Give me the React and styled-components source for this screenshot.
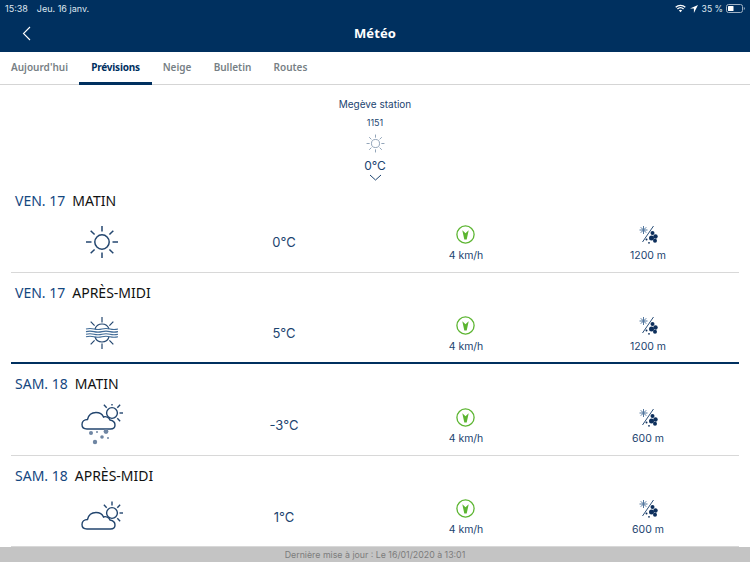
import React from "react";
import styled, { createGlobalStyle } from "styled-components";

const navy = "#00305f";
const ink = "#1c4470";

const GlobalStyle = createGlobalStyle`
  html, body { margin: 0; padding: 0; background: #fff; }
  body { font-family: "Noto Sans", "Open Sans", sans-serif; }
`;

const Page = styled.div`
  width: 750px;
  height: 562px;
  display: flex;
  flex-direction: column;
  overflow: hidden;
`;

const Header = styled.div`
  background: ${navy};
  height: 52px;
  flex: none;
  display: flex;
  flex-direction: column;
  color: #fff;
`;

const StatusBar = styled.div`
  height: 17px;
  padding: 0 5px;
  display: flex;
  align-items: center;
  justify-content: space-between;
  font-family: Inter, sans-serif;
  font-size: 9px;
  color: #dfe7ef;
`;

const StatusGroup = styled.div`
  display: flex;
  align-items: center;
  gap: ${({ $gap }) => $gap}px;
`;

const Percent = styled.span`
  font-size: 8.6px;
  margin-right: -1px;
`;

const NavBar = styled.div`
  flex: 1;
  display: flex;
  align-items: center;
  justify-content: center;
  position: relative;
  padding-bottom: 3px;
`;

const BackButton = styled.svg`
  position: absolute;
  left: 22px;
  top: 9px;
`;

const NavTitle = styled.div`
  font-size: 13px;
  font-weight: 700;
  letter-spacing: 0.1px;
`;

const Tabs = styled.div`
  height: 32px;
  flex: none;
  display: flex;
  border-bottom: 1px solid #d5d5d5;
  background: #fff;
`;

const Tab = styled.div`
  width: ${({ $w }) => $w}px;
  height: 33px;
  box-sizing: border-box;
  display: flex;
  align-items: center;
  justify-content: center;
  font-size: 10px;
  font-weight: ${({ $active }) => ($active ? 700 : 600)};
  letter-spacing: ${({ $active }) => ($active ? "-0.2px" : "0")};
  color: ${({ $active }) => ($active ? navy : "#777f85")};
  border-bottom: 3px solid ${({ $active }) => ($active ? navy : "transparent")};
`;

const Content = styled.div`
  flex: 1;
  min-height: 0;
  overflow: hidden;
  display: flex;
  flex-direction: column;
  padding: 0 11px;
`;

const Station = styled.div`
  height: 96px;
  flex: none;
  display: flex;
  flex-direction: column;
  align-items: center;
  color: ${ink};
  font-family: Inter, sans-serif;
`;

const StationName = styled.div`
  margin-top: 12px;
  font-size: 10px;
  line-height: 14px;
`;

const Altitude = styled.div`
  margin-top: 6px;
  font-size: 9px;
  line-height: 12px;
`;

const StationSun = styled.div`
  margin-top: 5px;
  height: 19px;
`;

const StationTemp = styled.div`
  font-size: 12px;
  line-height: 14px;
  margin-top: 6px;
  margin-bottom: 1px;
`;

const Forecast = styled.div`
  height: 91.5px;
  flex: none;
  box-sizing: border-box;
  display: flex;
  flex-direction: column;
  padding-top: 7px;
  border-bottom: ${({ $strong }) => ($strong ? `2px solid ${navy}` : "1px solid #d8d8d8")};
`;

const Heading = styled.div`
  height: 25px;
  flex: none;
  display: flex;
  align-items: center;
  gap: 7px;
  padding-left: 4px;
  font-size: 14px;
  color: #111;
`;

const Day = styled.span`
  color: #14477f;
`;

const Cells = styled.div`
  flex: 1;
  display: grid;
  grid-template-columns: repeat(4, 1fr);
  align-items: center;
  justify-items: center;
`;

const Temp = styled.div`
  font-family: Inter, sans-serif;
  font-size: 13px;
  color: ${ink};
`;

const Metric = styled.div`
  display: flex;
  flex-direction: column;
  align-items: center;
  gap: 5px;
  margin-top: 3px;
  font-family: Inter, sans-serif;
  font-size: 10.5px;
  line-height: 14px;
  color: ${ink};
`;

const Footer = styled.div`
  height: 15px;
  flex: none;
  background: #c4c4c4;
  color: #7c7c7c;
  font-family: Inter, sans-serif;
  font-size: 8.8px;
  display: flex;
  align-items: center;
  justify-content: center;
`;

const rays = (cx, cy, r1, r2, skip = []) =>
  [0, 45, 90, 135, 180, 225, 270, 315]
    .filter((a) => !skip.includes(a))
    .map((a) => {
      const t = (a * Math.PI) / 180;
      return (
        <line
          key={a}
          x1={cx + r1 * Math.cos(t)}
          y1={cy + r1 * Math.sin(t)}
          x2={cx + r2 * Math.cos(t)}
          y2={cy + r2 * Math.sin(t)}
        />
      );
    });

const Sun = ({ size = 34, color = "#23466f" }) => (
  <svg width={size} height={size} viewBox="0 0 34 34" fill="none" stroke={color} strokeWidth="1.5">
    <circle cx="17" cy="17" r="7.2" />
    {rays(17, 17, 10.5, 16)}
  </svg>
);

const Haze = () => (
  <svg width="34" height="34" viewBox="0 0 34 34" fill="none" stroke="#23466f" strokeWidth="1.2">
    <path d="M10 13a7.4 7.4 0 0 1 14 0M10 21a7.4 7.4 0 0 0 14 0" />
    {rays(17, 17, 10.5, 16, [0, 180])}
    <g stroke="#3f6a96" strokeWidth="1.1">
      <path d="M1 13q4-1 8 0t8 0 8 0 8 0" />
      <path d="M1 15.6q4-1 8 0t8 0 8 0 8 0" />
      <path d="M1 18.2q4-1 8 0t8 0 8 0 8 0" />
      <path d="M1 20.8q4-1 8 0t8 0 8 0 8 0" />
    </g>
  </svg>
);

const cloudPath =
  "M6 17C2 17 1 14.5 1 12.5C1 9.5 3.5 7.5 6.5 7.5C7.5 3 11 .5 15 .5C18.5 .5 21.5 2.5 22.5 5C25 4 28 5.5 29 8C32 8.5 34 10.5 34 13C34 15.5 32 17 29.5 17Z";

const Cloud = ({ snow }) => {
  const top = snow ? 8 : 16;
  return (
    <svg width="42" height="42" viewBox="0 0 42 42" fill="none" stroke="#23466f" strokeWidth="1.4">
      <g transform={`translate(0 ${top})`}>
        <path d={cloudPath} fill="#fff" />
      </g>
      <circle cx="31" cy={top + 1} r="5.4" fill="#fff" />
      {rays(31, top + 1, 7.5, 11.5, [90, 135, 180])}
      {snow && (
        <g fill="#6f86a3" stroke="none">
          <circle cx="10" cy="29" r="2" />
          <circle cx="16" cy="28" r="1" />
          <circle cx="25" cy="27.5" r="2.4" />
          <circle cx="21" cy="33" r="1.8" />
          <circle cx="27" cy="34" r="1" />
          <circle cx="14" cy="38" r="2.2" />
        </g>
      )}
    </svg>
  );
};

const Wind = () => (
  <svg width="19" height="19" viewBox="0 0 19 19" fill="none">
    <circle cx="9.5" cy="9.5" r="8.6" stroke="#5cb531" strokeWidth="1.3" />
    <path d="M6.3 5.2l3.2 3 3.2-3-2 9.4h-2.4z" fill="#5cb531" />
  </svg>
);

const SnowLimit = () => (
  <svg width="20" height="19" viewBox="0 0 20 19" fill="none">
    <line x1="15.5" y1="1" x2="4.5" y2="17" stroke="#2b4f78" strokeWidth="1" />
    <g stroke="#54789f" strokeWidth="1">
      <line x1="1.5" y1="5" x2="9.5" y2="5" />
      <line x1="5.5" y1="1" x2="5.5" y2="9" />
      <line x1="2.8" y1="2.3" x2="8.2" y2="7.7" />
      <line x1="8.2" y1="2.3" x2="2.8" y2="7.7" />
    </g>
    <g fill="#0d2f5c">
      <circle cx="14.5" cy="8" r="2" />
      <circle cx="17.5" cy="11.5" r="2.2" />
      <circle cx="13.5" cy="13" r="2.5" />
      <circle cx="17" cy="15.8" r="2" />
      <circle cx="8.5" cy="14.5" r="1" />
      <circle cx="11" cy="17.8" r="0.9" />
    </g>
  </svg>
);

const forecasts = [
  { day: "VEN. 17", part: "MATIN", icon: <Sun />, temp: "0°C", snow: "1200 m" },
  { day: "VEN. 17", part: "APRÈS-MIDI", icon: <Haze />, temp: "5°C", snow: "1200 m", strong: true },
  { day: "SAM. 18", part: "MATIN", icon: <Cloud snow />, temp: "-3°C", snow: "600 m" },
  { day: "SAM. 18", part: "APRÈS-MIDI", icon: <Cloud />, temp: "1°C", snow: "600 m" },
];

const tabs = [
  { label: "Aujourd'hui", w: 79 },
  { label: "Prévisions", w: 73, active: true },
  { label: "Neige", w: 50 },
  { label: "Bulletin", w: 61 },
  { label: "Routes", w: 55 },
];

export default function App() {
  return (
    <Page>
      <GlobalStyle />
      <Header>
        <StatusBar>
          <StatusGroup $gap={9}>
            <span>15:38</span>
            <span>Jeu. 16 janv.</span>
          </StatusGroup>
          <StatusGroup $gap={4}>
            <svg width="11" height="9" viewBox="0 0 11 9" fill="none" stroke="#fff" strokeWidth="1.3">
              <path d="M.7 3.2a7 7 0 0 1 9.6 0M2.4 5a4.6 4.6 0 0 1 6.2 0" />
              <path d="M5.5 8.2L3.9 6.5a2.3 2.3 0 0 1 3.2 0z" fill="#fff" stroke="none" />
            </svg>
            <svg width="8" height="8" viewBox="0 0 8 8">
              <path d="M8 0L0 3.6h3.9V8z" fill="#fff" />
            </svg>
            <Percent>35 %</Percent>
            <svg width="19" height="9" viewBox="0 0 19 9" fill="none">
              <rect x=".5" y=".5" width="16" height="8" rx="2" stroke="#9fb1c4" />
              <rect x="2" y="2" width="5.5" height="5" rx=".6" fill="#fff" />
              <path d="M17.8 3v3a1.6 1.6 0 0 0 0-3z" fill="#9fb1c4" />
            </svg>
          </StatusGroup>
        </StatusBar>
        <NavBar>
          <BackButton width="10" height="15" viewBox="0 0 10 15" fill="none" stroke="#fff" strokeWidth="1.1">
            <path d="M8 1L1.5 7.5 8 14" />
          </BackButton>
          <NavTitle>Météo</NavTitle>
        </NavBar>
      </Header>
      <Tabs>
        {tabs.map((t) => (
          <Tab key={t.label} $w={t.w} $active={t.active}>
            {t.label}
          </Tab>
        ))}
      </Tabs>
      <Content>
        <Station>
          <StationName>Megève station</StationName>
          <Altitude>1151</Altitude>
          <StationSun>
            <Sun size={19} color="#7e93ab" />
          </StationSun>
          <StationTemp>0°C</StationTemp>
          <svg width="13" height="7" viewBox="0 0 13 7" fill="none" stroke={ink} strokeWidth="1">
            <path d="M1 1l5.5 5L12 1" />
          </svg>
        </Station>
        {forecasts.map((f, i) => (
          <Forecast key={i} $strong={f.strong}>
            <Heading>
              <Day>{f.day}</Day>
              <span>{f.part}</span>
            </Heading>
            <Cells>
              {f.icon}
              <Temp>{f.temp}</Temp>
              <Metric>
                <Wind />
                4 km/h
              </Metric>
              <Metric>
                <SnowLimit />
                {f.snow}
              </Metric>
            </Cells>
          </Forecast>
        ))}
      </Content>
      <Footer>Dernière mise à jour : Le 16/01/2020 à 13:01</Footer>
    </Page>
  );
}
